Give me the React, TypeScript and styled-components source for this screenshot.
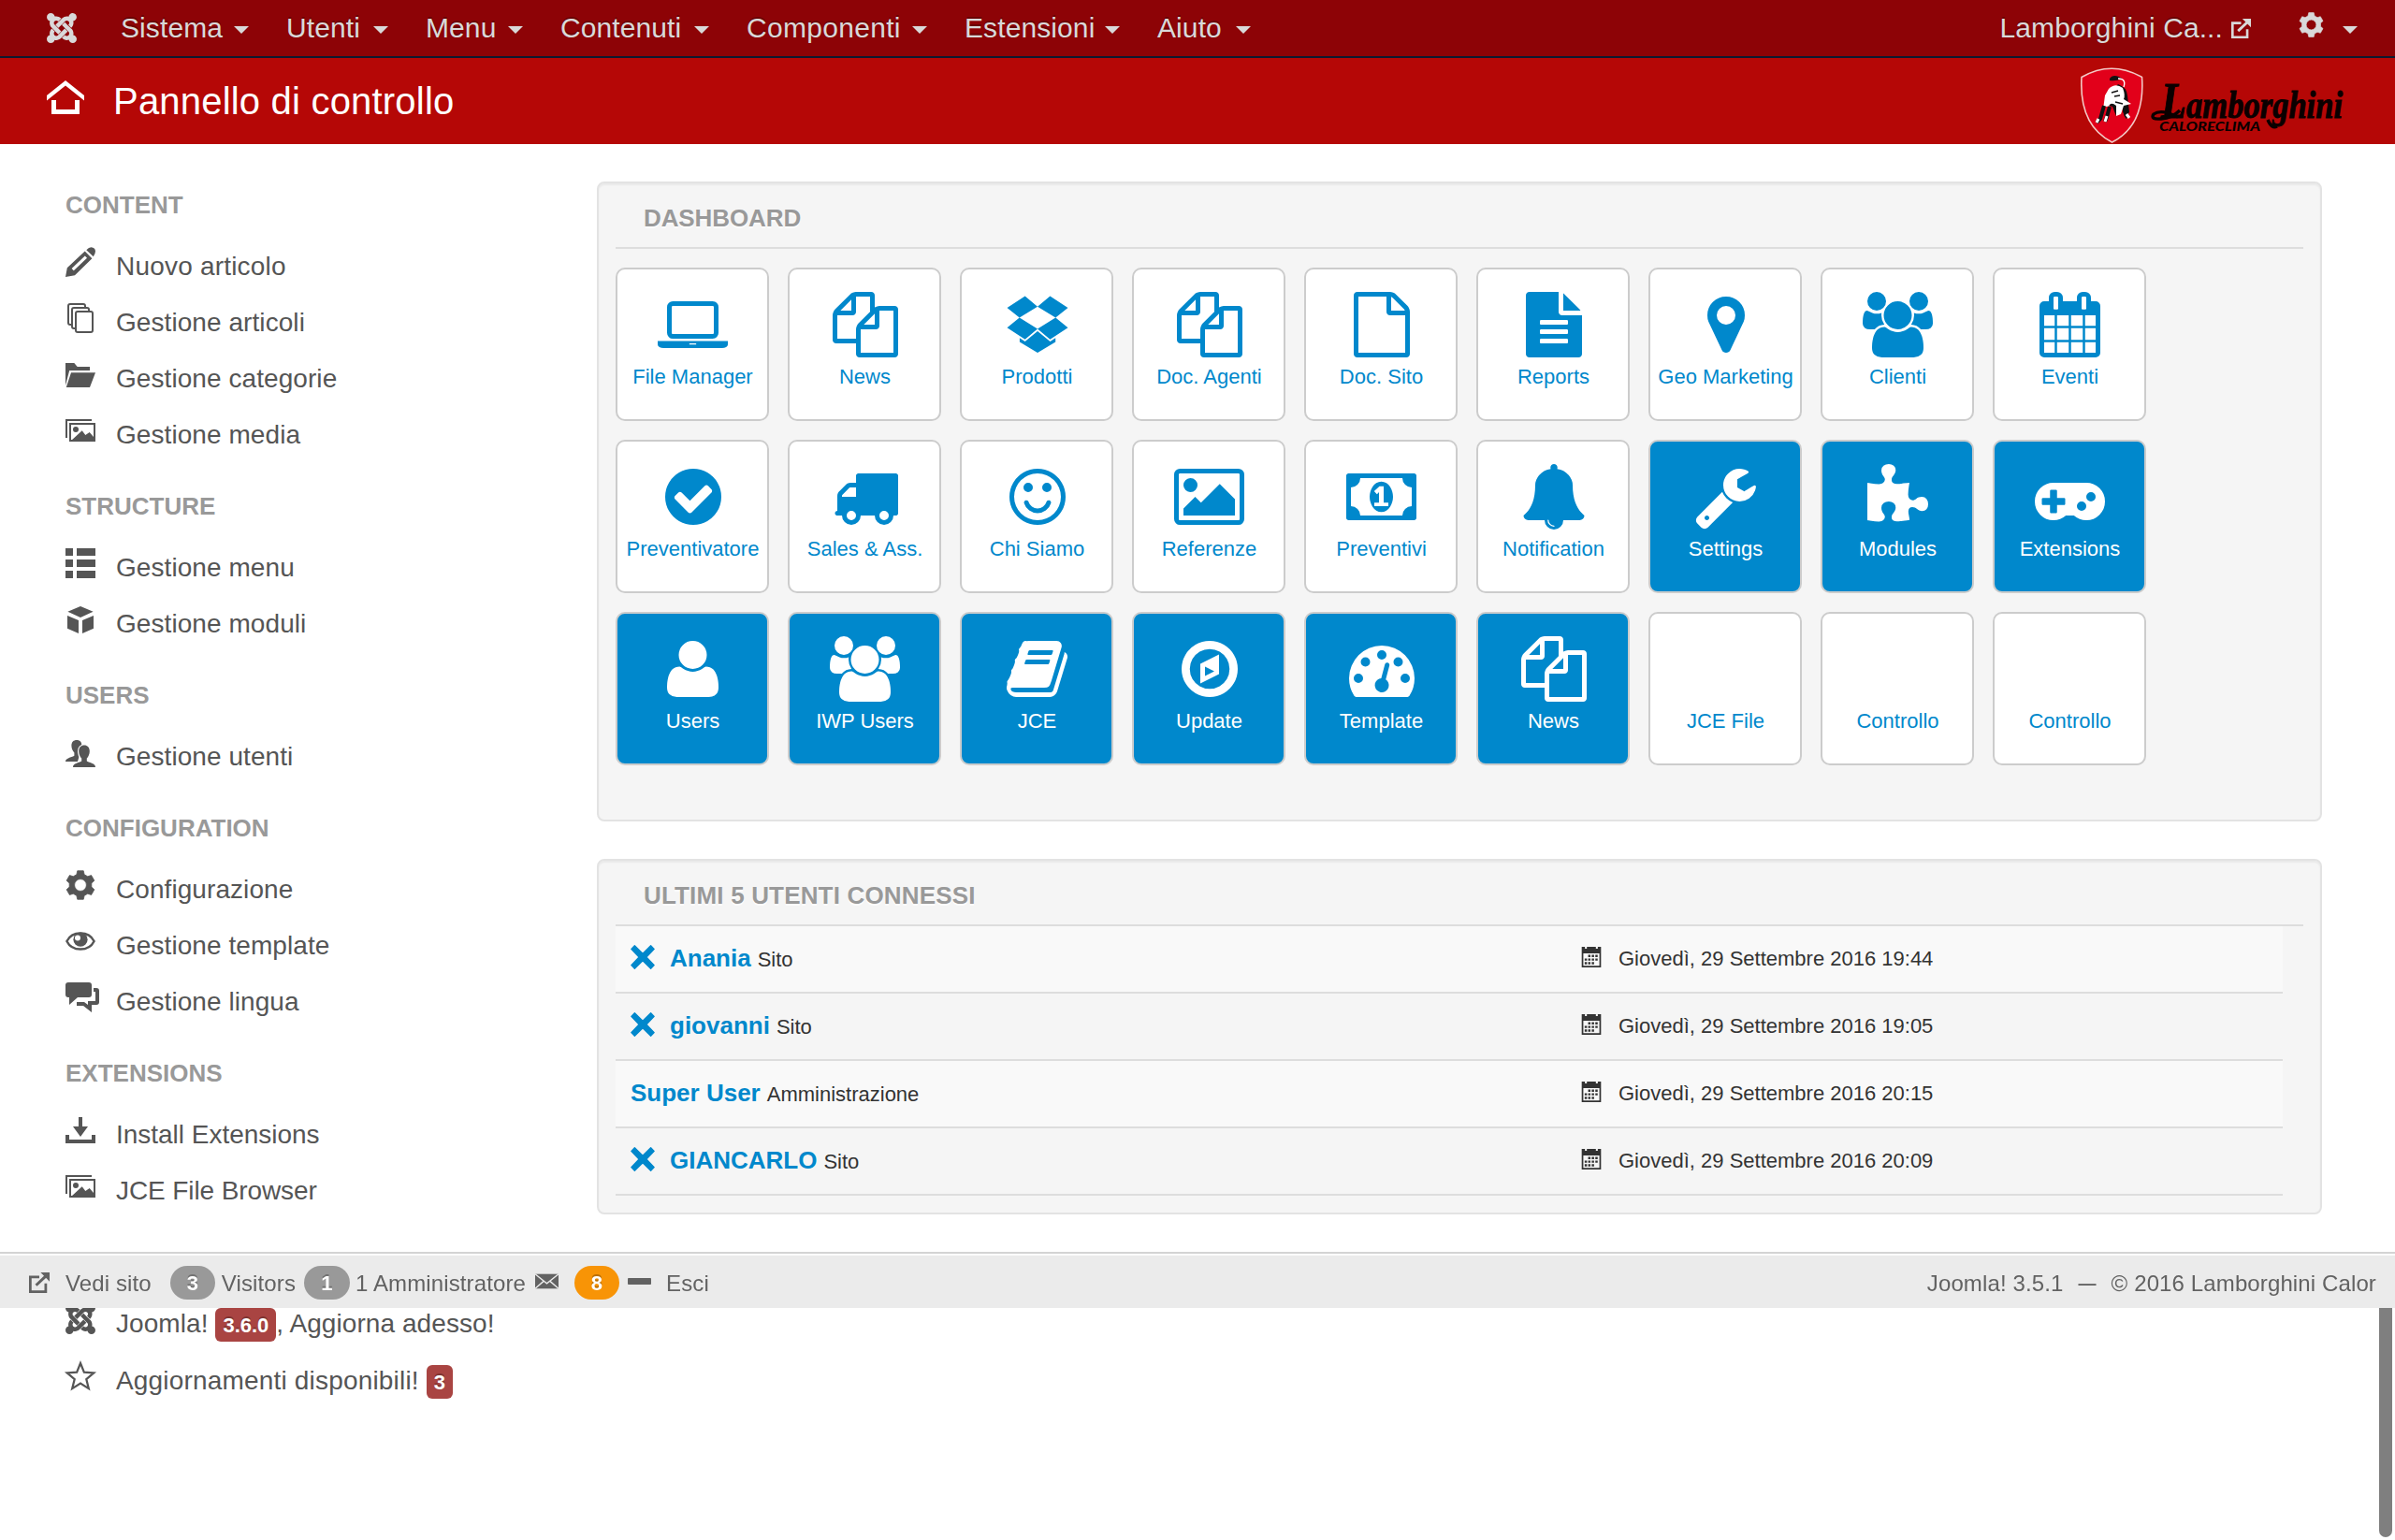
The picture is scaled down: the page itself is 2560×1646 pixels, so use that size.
import React from "react";
import styled, { createGlobalStyle, css } from "styled-components";
import { FaJoomla } from "react-icons/fa";

const GlobalStyle = createGlobalStyle`
  html, body { margin: 0; padding: 0; }
  body {
    background: #fff;
    color: #555;
    font-family: "Liberation Sans", Arial, Helvetica, sans-serif;
    font-size: 26px;
    overflow: hidden;
  }
  svg { display: block; flex: none; }
`;

/* ---------- tile glyphs, drawn on a 1792 unit em with the y axis up ---------- */

const ring =
  "M1536 640q0 -209 -103 -385.5t-279.5 -279.5t-385.5 -103t-385.5 103t-279.5 279.5t-103 385.5t103 385.5t279.5 279.5t385.5 103t385.5 -103t279.5 -279.5t103 -385.5z";
const dot = (x: number, y: number) =>
  `M${x} ${y}q0 53 -37.5 90.5t-90.5 37.5t-90.5 -37.5t-37.5 -90.5t37.5 -90.5t90.5 -37.5t90.5 37.5t37.5 90.5z`;
const bar = (y: number) =>
  `M1152 ${y}v64q0 14 -9 23t-23 9h-704q-14 0 -23 -9t-9 -23v-64q0 -14 9 -23t23 -9h704q14 0 23 9t9 23z`;

const glyphs: Record<string, [number, string]> = {
  laptop: [1920, "M416 256q-66 0 -113 47t-47 113v704q0 66 47 113t113 47h1088q66 0 113 -47t47 -113v-704q0 -66 -47 -113t-113 -47h-1088zM384 1120v-704q0 -13 9.5 -22.5t22.5 -9.5h1088q13 0 22.5 9.5t9.5 22.5v704q0 13 -9.5 22.5t-22.5 9.5h-1088q-13 0 -22.5 -9.5t-9.5 -22.5zM1760 192h160v-96q0 -40 -47 -68t-113 -28h-1600q-66 0 -113 28t-47 68v96h160h1600zM1040 96q16 0 16 16t-16 16h-160q-16 0 -16 -16t16 -16h160z"],
  files: [1792, "M1696 1152q40 0 68 -28t28 -68v-1216q0 -40 -28 -68t-68 -28h-960q-40 0 -68 28t-28 68v288h-544q-40 0 -68 28t-28 68v672q0 40 20 88t48 76l408 408q28 28 76 48t88 20h416q40 0 68 -28t28 -68v-328q68 40 128 40h416zM1152 939l-299 -299h299v299zM512 1323l-299 -299h299v299zM708 676l316 316v416h-384v-416q0 -40 -28 -68t-68 -28h-416v-640h512v256q0 40 20 88t48 76zM1664 -128v1152h-384v-416q0 -40 -28 -68t-68 -28h-416v-640h896z"],
  dropbox: [1792, "M402 829l494 -305l-342 -285l-490 319zM1388 274v-108l-490 -293v-1l-1 1l-1 -1v1l-489 293v108l147 -96l342 284v2l1 -1l1 1v-2l343 -284zM554 1418l342 -285l-494 -304l-338 270zM1390 829l338 -271l-489 -319l-343 285zM1239 1418l489 -319l-338 -270l-494 304z"],
  file: [1536, "M1468 1156q28 -28 48 -76t20 -88v-1152q0 -40 -28 -68t-68 -28h-1344q-40 0 -68 28t-28 68v1600q0 40 28 68t68 28h896q40 0 88 -20t76 -48zM1024 1400v-376h376q-10 29 -22 41l-313 313q-12 12 -41 22zM1408 -128v1024h-416q-40 0 -68 28t-28 68v416h-768v-1536h1280z"],
  report: [1536, "M1468 1060q14 -14 28 -36h-472v472q22 -14 36 -28zM992 896h544v-1056q0 -40 -28 -68t-68 -28h-1344q-40 0 -68 28t-28 68v1600q0 40 28 68t68 28h800v-544q0 -40 28 -68t68 -28z" + bar(160) + bar(416) + bar(672)],
  marker: [1024, "M768 896q0 106 -75 181t-181 75t-181 -75t-75 -181t75 -181t181 -75t181 75t75 181zM1024 896q0 -109 -33 -179l-364 -774q-16 -33 -47.5 -52t-67.5 -19t-67.5 19t-46.5 52l-365 774q-33 70 -33 179q0 212 150 362t362 150t362 -150t150 -362z"],
  users: [1920, "M593 640q-162 -5 -265 -128h-134q-82 0 -138 40.5t-56 118.5q0 353 124 353q6 0 43.5 -21t97.5 -42.5t119 -21.5q67 0 133 23q-5 -37 -5 -66q0 -139 81 -256zM1664 3q0 -120 -73 -189.5t-194 -69.5h-874q-121 0 -194 69.5t-73 189.5q0 53 3.5 103.5t14 109t26.5 108.5t43 97.5t62 81t85.5 53.5t111.5 20q10 0 43 -21.5t73 -48t107 -48t135 -21.5t135 21.5t107 48t73 48t43 21.5q61 0 111.5 -20t85.5 -53.5t62 -81t43 -97.5t26.5 -108.5t14 -109t3.5 -103.5zM640 1280q0 -106 -75 -181t-181 -75t-181 75t-75 181t75 181t181 75t181 -75t75 -181zM1344 896q0 -159 -112.5 -271.5t-271.5 -112.5t-271.5 112.5t-112.5 271.5t112.5 271.5t271.5 112.5t271.5 -112.5t112.5 -271.5zM1920 671q0 -78 -56 -118.5t-138 -40.5h-134q-103 123 -265 128q81 117 81 256q0 29 -5 66q66 -23 133 -23q59 0 119 21.5t97.5 42.5t43.5 21q124 0 124 -353zM1792 1280q0 -106 -75 -181t-181 -75t-181 75t-75 181t75 181t181 75t181 -75t75 -181z"],
  calendar: [1664, "M128 -128h288v288h-288v-288zM480 -128h320v288h-320v-288zM128 224h288v320h-288v-320zM480 224h320v320h-320v-320zM128 608h288v288h-288v-288zM864 -128h320v288h-320v-288zM480 608h320v288h-320v-288zM1248 -128h288v288h-288v-288zM864 224h320v320h-320v-320zM512 1088v288q0 13 -9.5 22.5t-22.5 9.5h-64q-13 0 -22.5 -9.5t-9.5 -22.5v-288q0 -13 9.5 -22.5t22.5 -9.5h64q13 0 22.5 9.5t9.5 22.5zM1248 224h288v320h-288v-320zM864 608h320v288h-320v-288zM1248 608h288v288h-288v-288zM1280 1088v288q0 13 -9.5 22.5t-22.5 9.5h-64q-13 0 -22.5 -9.5t-9.5 -22.5v-288q0 -13 9.5 -22.5t22.5 -9.5h64q13 0 22.5 9.5t9.5 22.5zM1664 1152v-1280q0 -52 -38 -90t-90 -38h-1408q-52 0 -90 38t-38 90v1280q0 52 38 90t90 38h128v96q0 66 47 113t113 47h64q66 0 113 -47t47 -113v-96h384v96q0 66 47 113t113 47h64q66 0 113 -47t47 -113v-96h128q52 0 90 -38t38 -90z"],
  check: [1536, "M1284 802q0 28 -18 46l-91 90q-19 19 -45 19t-45 -19l-408 -407l-226 226q-19 19 -45 19t-45 -19l-91 -90q-18 -18 -18 -46q0 -27 18 -45l362 -362q19 -19 45 -19q27 0 46 19l543 543q18 18 18 45z" + ring],
  truck: [1792, "M640 128q0 52 -38 90t-90 38t-90 -38t-38 -90t38 -90t90 -38t90 38t38 90zM256 640h384v256h-158q-13 0 -22 -9l-195 -195q-9 -9 -9 -22v-30zM1536 128q0 52 -38 90t-90 38t-90 -38t-38 -90t38 -90t90 -38t90 38t38 90zM1792 1216v-1024q0 -15 -4 -26.5t-13.5 -18.5t-16.5 -11.5t-23.5 -6t-22.5 -2t-25.5 0t-22.5 0.5q0 -106 -75 -181t-181 -75t-181 75t-75 181h-384q0 -106 -75 -181t-181 -75t-181 75t-75 181h-64q-3 0 -22.5 -0.5t-25.5 0t-22.5 2t-23.5 6t-16.5 11.5t-13.5 18.5t-4 26.5q0 26 19 45t45 19v320q0 8 -0.5 35t0 38t2.5 34.5t6.5 37t14 30.5t22.5 30l198 198q19 19 50.5 32t58.5 13h160v192q0 26 19 45t45 19h1024q26 0 45 -19t19 -45z"],
  smile: [1536, "M1134 461q-37 -121 -138 -195t-228 -74t-228 74t-138 195q-8 25 4 48.5t38 31.5q25 8 48.5 -4t31.5 -38q25 -80 92.5 -129.5t151.5 -49.5t151.5 49.5t92.5 129.5q8 26 32 38t49 4t37 -31.5t4 -48.5z" + dot(640, 896) + dot(1152, 896) + "M1408 640q0 130 -51 248.5t-136.5 204t-204 136.5t-248.5 51t-248.5 -51t-204 -136.5t-136.5 -204t-51 -248.5t51 -248.5t136.5 -204t204 -136.5t248.5 -51t248.5 51t204 136.5t136.5 204t51 248.5z" + ring],
  picture: [1920, "M640 960q0 -80 -56 -136t-136 -56t-136 56t-56 136t56 136t136 56t136 -56t56 -136zM1664 576v-448h-1408v192l320 320l160 -160l512 512zM1760 1280h-1600q-13 0 -22.5 -9.5t-9.5 -22.5v-1216q0 -13 9.5 -22.5t22.5 -9.5h1600q13 0 22.5 9.5t9.5 22.5v1216q0 13 -9.5 22.5t-22.5 9.5zM1920 1248v-1216q0 -66 -47 -113t-113 -47h-1600q-66 0 -113 47t-47 113v1216q0 66 47 113t113 47h1600q66 0 113 -47t47 -113z"],
  money: [1920, "M768 384h384v96h-128v448h-114l-148 -137l77 -80q42 37 55 57h2v-288h-128v-96zM1280 640q0 -70 -21 -142t-59.5 -134t-101.5 -101t-138 -39t-138 39t-101.5 101t-59.5 134t-21 142t21 142t59.5 134t101.5 101t138 39t138 -39t101.5 -101t59.5 -134t21 -142zM1792 384v512q-106 0 -181 75t-75 181h-1152q0 -106 -75 -181t-181 -75v-512q106 0 181 -75t75 -181h1152q0 106 75 181t181 75zM1920 1216v-1152q0 -26 -19 -45t-45 -19h-1792q-26 0 -45 19t-19 45v1152q0 26 19 45t45 19h1792q26 0 45 -19t19 -45z"],
  bell: [1792, "M912 -160q0 16 -16 16q-59 0 -101.5 42.5t-42.5 101.5q0 16 -16 16t-16 -16q0 -73 51.5 -124.5t124.5 -51.5q16 0 16 16zM1728 128q0 -52 -38 -90t-90 -38h-448q0 -106 -75 -181t-181 -75t-181 75t-75 181h-448q-52 0 -90 38t-38 90q50 42 91 88t85 119.5t74.5 158.5t50 206t19.5 260q0 152 117 282.5t307 158.5q-8 19 -8 39q0 40 28 68t68 28t68 -28t28 -68q0 -20 -8 -39q190 -28 307 -158.5t117 -282.5q0 -139 19.5 -260t50 -206t74.5 -158.5t85 -119.5t91 -88z"],
  wrench: [1664, "M384 64q0 26 -19 45t-45 19t-45 -19t-19 -45t19 -45t45 -19t45 19t19 45zM1028 484l-682 -682q-37 -37 -90 -37q-52 0 -91 37l-106 108q-38 36 -38 90q0 53 38 91l681 681q39 -98 114.5 -173.5t173.5 -114.5zM1662 919q0 -39 -23 -106q-47 -134 -164.5 -217.5t-258.5 -83.5q-185 0 -316.5 131.5t-131.5 316.5t131.5 316.5t316.5 131.5q58 0 121.5 -16.5t107.5 -46.5q16 -11 16 -28t-16 -28l-293 -169v-224l193 -107q5 3 79 48.5t135.5 81t70.5 35.5q15 0 23.5 -10t8.5 -25z"],
  puzzle: [1664, "M1664 438q0 -81 -44.5 -135t-123.5 -54q-41 0 -77.5 17.5t-59 38t-56.5 38t-71 17.5q-110 0 -110 -124q0 -39 16 -115t15 -115v-5q-22 0 -33 -1q-34 -3 -97.5 -11.5t-115.5 -13.5t-98 -5q-61 0 -103 26.5t-42 83.5q0 37 17.5 71t38 56.5t38 59t17.5 77.5q0 79 -54 123.5t-135 44.5q-84 0 -143 -45.5t-59 -127.5q0 -43 15 -83t33.5 -64.5t33.5 -53t15 -50.5q0 -45 -46 -89q-37 -35 -117 -35q-95 0 -245 24q-9 2 -27.5 4t-27.5 4l-13 2q-1 0 -3 1q-2 0 -2 1v1024q2 -1 17.5 -3.5t34 -5t21.5 -3.5q150 -24 245 -24q80 0 117 35q46 44 46 89q0 22 -15 50.5t-33.5 53t-33.5 64.5t-15 83q0 82 59 127.5t144 45.5q80 0 134 -44.5t54 -123.5q0 -41 -17.5 -77.5t-38 -59t-38 -56.5t-17.5 -71q0 -57 42 -83.5t103 -26.5q64 0 180 15t163 17v-2q-1 -2 -3.5 -17.5t-5 -34t-3.5 -21.5q-24 -150 -24 -245q0 -80 35 -117q44 -46 89 -46q22 0 50.5 15t53 33.5t64.5 33.5t83 15q82 0 127.5 -59t45.5 -143z"],
  gamepad: [1920, "M832 448v128q0 14 -9 23t-23 9h-192v192q0 14 -9 23t-23 9h-128q-14 0 -23 -9t-9 -23v-192h-192q-14 0 -23 -9t-9 -23v-128q0 -14 9 -23t23 -9h192v-192q0 -14 9 -23t23 -9h128q14 0 23 9t9 23v192h192q14 0 23 9t9 23z" + dot(1408, 384) + dot(1664, 640) + "M1920 512q0 -212 -150 -362t-362 -150q-192 0 -338 128h-220q-146 -128 -338 -128q-212 0 -362 150t-150 362t150 362t362 150h896q212 0 362 -150t150 -362z"],
  user: [1408, "M1408 131q0 -120 -73 -189.5t-194 -69.5h-874q-121 0 -194 69.5t-73 189.5q0 53 3.5 103.5t14 109t26.5 108.5t43 97.5t62 81t85.5 53.5t111.5 20q9 0 42 -21.5t74.5 -48t108 -48t133.5 -21.5t133.5 21.5t108 48t74.5 48t42 21.5q61 0 111.5 -20t85.5 -53.5t62 -81t43 -97.5t26.5 -108.5t14 -109t3.5 -103.5zM1088 1024q0 -159 -112.5 -271.5t-271.5 -112.5t-271.5 112.5t-112.5 271.5t112.5 271.5t271.5 112.5t271.5 -112.5t112.5 -271.5z"],
  book: [1664, "M1639 1058q40 -57 18 -129l-275 -906q-19 -64 -76.5 -107.5t-122.5 -43.5h-923q-77 0 -148.5 53.5t-99.5 131.5q-24 67 -2 127q0 4 3 27t4 37q1 8 -3 21.5t-3 19.5q2 11 8 21t16.5 23.5t16.5 23.5q23 38 45 91.5t30 91.5q3 10 0.5 30t-0.5 28q3 11 17 28t17 23q21 36 42 92t25 90q1 9 -2.5 32t0.5 28q4 13 22 30.5t22 22.5q19 26 42.5 84.5t27.5 96.5q1 8 -3 25.5t-2 26.5q2 8 9 18t18 23t17 21q8 12 16.5 30.5t15 35t16 36t19.5 32t26.5 23.5t36 11.5t47.5 -5.5l-1 -3q38 9 51 9h761q74 0 114 -56t18 -130l-274 -906q-36 -119 -71.5 -153.5t-128.5 -34.5h-869q-27 0 -38 -15q-11 -16 -1 -43q24 -70 144 -70h923q29 0 56 15.5t35 41.5l300 987q7 22 5 57q38 -15 59 -43zM575 1056q-4 -13 2 -22.5t20 -9.5h608q13 0 25.5 9.5t16.5 22.5l21 64q4 13 -2 22.5t-20 9.5h-608q-13 0 -25.5 -9.5t-16.5 -22.5zM492 800q-4 -13 2 -22.5t20 -9.5h608q13 0 25.5 9.5t16.5 22.5l21 64q4 13 -2 22.5t-20 9.5h-608q-13 0 -25.5 -9.5t-16.5 -22.5z"],
  compass: [1536, "M640 448l256 128l-256 128v-256zM1024 1039v-542l-512 -256v542zM1312 640q0 148 -73 273t-198 198t-273 73t-273 -73t-198 -198t-73 -273t73 -273t198 -198t273 -73t273 73t198 198t73 273z" + ring],
  gauge: [1792, dot(384, 384) + dot(576, 832) + dot(1664, 384) + dot(1024, 1024) + dot(1472, 832) + "M1004 351l101 382q6 26 -7.5 48.5t-38.5 29.5t-48 -6.5t-30 -39.5l-101 -382q-60 -5 -107 -43.5t-63 -98.5q-20 -77 20 -146t117 -89t146 20t89 117q16 60 -6 117t-72 91zM1792 384q0 -261 -141 -483q-19 -29 -54 -29h-1402q-35 0 -54 29q-141 221 -141 483q0 182 71 348t191 286t286 191t348 71t348 -71t286 -191t191 -286t71 -348z"],
};

const Glyph = ({ name }: { name: string }) => {
  const [w, d] = glyphs[name];
  return (
    <svg width={(w * 70) / 1792} height={70} viewBox={`0 0 ${w} 1792`} fill="currentColor">
      <path fillRule="evenodd" transform="translate(0 1536) scale(1 -1)" d={d} />
    </svg>
  );
};

/* ---------- small 32 unit icons ---------- */

const gearPath = (() => {
  const pts: string[] = [];
  for (let i = 0; i < 6; i++) {
    const base = -90 + i * 60;
    [[-20, 12], [-12, 15.6], [12, 15.6], [20, 12]].forEach(([a, r]) => {
      const t = ((base + a) * Math.PI) / 180;
      pts.push(`${(16 + r * Math.cos(t)).toFixed(2)} ${(16 + r * Math.sin(t)).toFixed(2)}`);
    });
  }
  return `M${pts.join("L")}ZM16 9.6a6.4 6.4 0 1 0 0 12.8a6.4 6.4 0 1 0 0-12.8Z`;
})();

const starPath = (() => {
  const pts: string[] = [];
  for (let i = 0; i < 10; i++) {
    const r = i % 2 ? 6.6 : 15;
    const t = ((-90 + i * 36) * Math.PI) / 180;
    pts.push(`${(16 + r * Math.cos(t)).toFixed(2)} ${(17 + r * Math.sin(t)).toFixed(2)}`);
  }
  return `M${pts.join("L")}Z`;
})();

const picture = (
  <>
    <path d="M1 24V5H28" fill="none" stroke="currentColor" strokeWidth="2" />
    <rect x="5" y="9" width="26" height="18" fill="none" stroke="currentColor" strokeWidth="2" />
    <circle cx="11" cy="15" r="3" />
    <path d="M6 27L17.7 16.2L21.3 21L25.7 18L30 23V27Z" />
  </>
);

const shapes: Record<string, React.ReactNode> = {
  pencil: (
    <>
      <path fillRule="evenodd" d="M20.7 4.6L28.4 12.3L10 30.2L0 32L1.8 22.2ZM20.8 9.5L6.6 23L8.8 25.2L23 11.7Z" />
      <path d="M22.3 3.2Q25 .3 27.5 .3Q31.7 .6 32 4.6Q32 7.2 29.8 10.2Z" />
    </>
  ),
  copy: (
    <g fill="#fff" stroke="currentColor" strokeWidth="2">
      <rect x="3" y="1" width="18" height="22" rx="2" />
      <rect x="7" y="5" width="18" height="22" rx="2" />
      <rect x="11" y="9" width="18" height="22" rx="2" />
    </g>
  ),
  folder: <path d="M0 4H9.3L12.7 8H26V12H4.2L0 28ZM6 14.2H32L26 30H.8Z" />,
  picture,
  list: <path d="M0 0H8V8H0ZM12 0H32V8H12ZM0 12H8V20H0ZM12 12H32V20H12ZM0 24H8V32H0ZM12 24H32V32H12Z" />,
  cube: <path d="M16 2L29.6 7.7L16 14L2.4 7.7ZM2 12L14 17V31L2 25.8ZM30 12L18 17V31L30 25.8Z" />,
  people: (
    <>
      <path d="M6.4 9C6.4 5 8.6 3 12 3S17.4 5 17.4 9C17.4 12 16 14.6 15 16V19L13 26H0C0 22.6 6 21.6 9.4 19.8V16.4C7.8 15 6.4 12 6.4 9Z" />
      <path
        d="M14.2 15C14.2 10.8 16.6 8.6 20 8.6S25.8 10.8 25.8 15C25.8 18 24.4 21 22.8 22.6V25.6C26 27.4 32 28 32 32H8C8 28 14 27.4 17.2 25.6V22.6C15.6 21 14.2 18 14.2 15Z"
        stroke="#fff"
        strokeWidth="2.4"
        paintOrder="stroke"
      />
    </>
  ),
  gear: <path fillRule="evenodd" stroke="currentColor" strokeWidth=".8" strokeLinejoin="round" d={gearPath} />,
  eye: (
    <>
      <path d="M1.4 16C7 4.6 25 4.6 30.6 16C25 27.4 7 27.4 1.4 16Z" fill="none" stroke="currentColor" strokeWidth="2.4" />
      <circle cx="16" cy="14.2" r="7.6" />
      <circle cx="13" cy="12.6" r="3" fill="#fff" />
    </>
  ),
  chat: (
    <path d="M3 0H25Q28 0 28 3V13Q28 16 25 16H13L4 24V16H3Q0 16 0 13V3Q0 0 3 0ZM30 6H33Q36 6 36 9V21Q36 24 33 24H28V32L19 25H12V21H20L24 24V20H32V10H30Z" />
  ),
  download: <path d="M14 2H18V12H24L16 23L8 12H14ZM0 21H4V26H28V21H32V30H0Z" />,
  star: <path d={starPath} fill="none" stroke="currentColor" strokeWidth="2.2" />,
  external: (
    <>
      <path d="M16 7H2V30H26V17" fill="none" stroke="currentColor" strokeWidth="4" />
      <path d="M11 20L27 5" fill="none" stroke="currentColor" strokeWidth="4.4" />
      <path d="M18 0H32V14Z" />
    </>
  ),
  cross: (
    <path d="M5.4 1L16 11.4L26.6 1L31 5.4L20.8 16L31 26.6L26.6 31L16 20.6L5.4 31L1 26.6L11.2 16L1 5.4Z" stroke="currentColor" strokeWidth="1.6" strokeLinejoin="round" />
  ),
  calendar: (
    <>
      <path fillRule="evenodd" d="M1 0H6V3H9V0H23V3H26V0H31V32H1ZM3.5 10V29.5H28.5V10Z" />
      <path d="M11 12.500h3.6v3.6H11zM16.600 12.500h3.6v3.6h-3.6zM22.200 12.500h3.6v3.6h-3.6zM5.600 18h3.6v3.6H5.600zM11 18h3.6v3.6H11zM16.600 18h3.6v3.6h-3.6zM22.200 18h3.6v3.6h-3.6zM5.600 23.500h3.6v3.6H5.600zM11 23.500h3.6v3.6H11zM16.600 23.500h3.6v3.6h-3.6z" />
    </>
  ),
  mail: (
    <>
      <path d="M0 6H32V26H0Z" />
      <path d="M0 6L16 19L32 6M0 26L12 15.5M32 26L20 15.5" fill="none" stroke="#ebebeb" strokeWidth="1.8" />
    </>
  ),
  minus: <path d="M1 11.500H31Q32 11.500 32 13V19Q32 20.500 31 20.500H1Q0 20.500 0 19V13Q0 11.500 1 11.500Z" />,
};

const JoomlaMark = styled(FaJoomla)`
  width: 32px;
  height: 32px;
`;

const Icon = ({ name, size = 32 }: { name: string; size?: number }) =>
  name === "joomla" ? (
    <JoomlaMark viewBox="0 32 448 448" />
  ) : (
    <svg width={size} height={size} viewBox="0 0 32 32" fill="currentColor" overflow="visible">
      {shapes[name]}
    </svg>
  );

/* ---------- layout ---------- */

const Page = styled.div`
  width: 2560px;
  height: 1646px;
  overflow: hidden;
`;

const NavBar = styled.nav`
  box-sizing: border-box;
  height: 62px;
  padding: 0 40px 0 50px;
  display: flex;
  align-items: center;
  background: #8d0306;
  border-bottom: 2px solid #0d1a30;
  color: #d9d9d9;
  font-size: 30px;
  line-height: 60px;
  letter-spacing: 0.1px;
  text-shadow: 0 -2px 0 rgba(0, 0, 0, 0.25);
`;

const Menu = styled.ul`
  display: flex;
  flex: 1;
  margin: 0 0 0 47px;
  padding: 0;
  gap: 40px;
  list-style: none;
`;

const MenuItem = styled.li<{ $w: number; $track?: number }>`
  display: flex;
  align-items: center;
  width: ${(p) => p.$w}px;
  justify-content: space-between;
  letter-spacing: ${(p) => p.$track ?? 0.1}px;
  white-space: nowrap;
`;

const Caret = styled.span`
  margin-top: 4px;
  border: 8px solid transparent;
  border-top-color: currentColor;
  border-bottom-width: 0;
`;

const SiteLink = styled.a`
  display: flex;
  align-items: center;
  gap: 9px;
  margin-right: 51px;
`;

const Settings = styled.div`
  display: flex;
  align-items: center;
  gap: 20px;
  & > svg { margin-top: -7px; }
`;

const Header = styled.header`
  box-sizing: border-box;
  height: 92px;
  padding: 0 48px 0 50px;
  display: flex;
  align-items: center;
  background: #b50706;
  color: #fff;
`;

const HomeIcon = styled.svg`
  margin-top: -8px;
`;

const Title = styled.h1`
  flex: 1;
  margin: 0 0 0 31px;
  font-size: 40px;
  font-weight: 400;
  line-height: 92px;
  letter-spacing: 0.2px;
`;

const Columns = styled.div`
  display: flex;
  padding-left: 70px;
`;

const Sidebar = styled.aside`
  width: 568px;
  padding-top: 18px;
`;

const GroupTitle = styled.h2`
  box-sizing: border-box;
  height: 82px;
  margin: 0;
  padding-top: 28px;
  color: #999;
  font-size: 26px;
  line-height: 38px;
  text-transform: uppercase;
`;

const SideItem = styled.a<{ $tall?: boolean; $track?: number }>`
  box-sizing: border-box;
  display: flex;
  align-items: center;
  height: ${(p) => (p.$tall ? 62 : 60)}px;
  padding-top: 2px;
  font-size: 28px;
  letter-spacing: ${(p) => p.$track ?? 0.07}px;
  color: #555;
  white-space: pre;
  & > svg { margin: -10px 22px 0 0; }
`;

const Label = styled.span`
  box-sizing: border-box;
  height: 36px;
  padding: 0 8px;
  margin-top: 2px;
  border-radius: 6px;
  background: #a94442;
  color: #fff;
  font-size: 22px;
  font-weight: 700;
  line-height: 37px;
  letter-spacing: 0;
  text-shadow: 0 -2px 0 rgba(0, 0, 0, 0.25);
`;

const Main = styled.main`
  display: flex;
  flex-direction: column;
  gap: 40px;
  padding-top: 40px;
`;

const Panel = styled.section<{ $h: number }>`
  box-sizing: border-box;
  width: 1844px;
  height: ${(p) => p.$h}px;
  padding: 0 18px;
  border: 2px solid #e3e3e3;
  border-radius: 8px;
  background: #f5f5f5;
  box-shadow: inset 0 2px 2px rgba(0, 0, 0, 0.05);
`;

const PanelTitle = styled.h2<{ $track: number }>`
  margin: 0;
  padding: 6px 30px 0;
  border-bottom: 2px solid #ddd;
  color: #999;
  font-size: 26px;
  line-height: 62px;
  text-transform: uppercase;
  text-shadow: 0 2px 0 rgba(255, 255, 255, 0.8);
  letter-spacing: ${(p) => p.$track}px;
`;

const Tiles = styled.div`
  display: flex;
  flex-wrap: wrap;
  gap: 20px;
  padding-top: 20px;
`;

const Tile = styled.a<{ $blue?: boolean }>`
  box-sizing: border-box;
  width: 164px;
  height: 164px;
  padding: 24px 0 0 1px;
  display: flex;
  flex-direction: column;
  align-items: center;
  border: 2px solid #ccc;
  border-radius: 10px;
  ${(p) =>
    p.$blue
      ? css`background: #0088cc; color: #fff;`
      : css`background: #fff; color: #0088cc;`}
`;

const TileIcon = styled.span`
  height: 70px;
`;

const TileText = styled.span`
  font-size: 22px;
  line-height: 42px;
  white-space: nowrap;
`;

const Row = styled.div<{ $odd: boolean }>`
  box-sizing: border-box;
  width: 1782px;
  height: 72px;
  padding-left: 16px;
  display: grid;
  grid-template-columns: 1016px 1fr;
  align-items: center;
  border-bottom: 2px solid #ddd;
  background: ${(p) => (p.$odd ? "#f9f9f9" : "transparent")};
`;

const UserCell = styled.div`
  display: flex;
  align-items: center;
  & > svg { margin: -5px 16px 0 0; color: #0088cc; }
`;

const UserName = styled.div`
  color: #0088cc;
  font-weight: 700;
  font-size: 26px;
  line-height: 40px;
`;

const Place = styled.small`
  margin-left: 7px;
  color: #333;
  font-size: 22px;
  font-weight: 400;
`;

const DateCell = styled.div`
  display: flex;
  align-items: center;
  gap: 18px;
  color: #333;
  font-size: 22px;
  & > svg { margin-top: -5px; }
`;

const StatusBar = styled.footer`
  position: fixed;
  z-index: 2;
  left: 0;
  top: 1338px;
  box-sizing: border-box;
  width: 2560px;
  height: 60px;
  padding: 4px 20px 0 31px;
  display: flex;
  align-items: center;
  background: #ebebeb;
  border-top: 2px solid #d4d4d4;
  box-shadow: inset 0 2px 0 #fcfcfc;
  color: #626262;
  font-size: 24px;
  line-height: 56px;
  letter-spacing: 0.12px;
  white-space: nowrap;
`;

const Slot = styled.span<{ $l?: number; $up?: number }>`
  display: flex;
  margin-left: ${(p) => p.$l ?? 0}px;
  margin-top: ${(p) => (p.$up ? -p.$up : 2)}px;
`;

const Pill = styled.span<{ $l: number; $w: number; $color: string }>`
  margin-left: ${(p) => p.$l}px;
  width: ${(p) => p.$w}px;
  height: 36px;
  border-radius: 18px;
  background: ${(p) => p.$color};
  color: #fff;
  font-size: 22px;
  font-weight: 700;
  line-height: 38px;
  text-align: center;
  text-shadow: 0 -2px 0 rgba(0, 0, 0, 0.25);
`;

const Legal = styled.span`
  display: flex;
  gap: 16px;
  margin-left: auto;
  margin-top: 2px;
`;

const Dash = styled.span`
  font-size: 19px;
  font-weight: 700;
`;

const ScrollThumb = styled.div`
  position: fixed;
  right: 3px;
  top: 1390px;
  width: 14px;
  height: 253px;
  border-radius: 7px;
  background: #7f7f7f;
`;

/* ---------- brand ---------- */

const Brand = () => (
  <svg width="288" height="92" viewBox="0 0 288 92" overflow="visible">
    <path d="M1 20.5Q33 2 65.500 20.500Q69 72 33.500 90Q-2 72 1 20.500Z" fill="#e2001a" stroke="#f3c9c6" strokeWidth="1.6" />
    <path d="M31 22Q34 17 41 20L44 22Q38 25 31 24Z" fill="#111" />
    <path d="M40 22Q49 22 46 31" fill="none" stroke="#fff" strokeWidth="1.4" />
    <path d="M40 28Q49 31 50 40L52 58L47 63L43 50L38 62L34 52L27 50Q29 42 33 36Z" fill="#111" />
    <path d="M30 33Q37 26 45 32Q48 40 46 44L54 49L46 51L43 60L38 62L38 51Q32 46 30 52Q25 51 24 55L26 40Z" fill="#fff" />
    <path d="M33 37l7-2M36 41l6-1M37 47l8 2" stroke="#111" strokeWidth="1.4" />
    <path d="M25 51L21 65L17 69M31 52L28 63L26 68M47 56L50 64" fill="none" stroke="#111" strokeWidth="4" />
    <path d="M19 65l-2 4M28 62l-2 6M49 60l3 4" fill="none" stroke="#fff" strokeWidth="3" />
    <text x="86" y="64" fill="#0a0000" fontFamily="'Liberation Serif', serif" fontStyle="italic" fontWeight="700" fontSize="42" textLength="194" lengthAdjust="spacingAndGlyphs" stroke="#0a0000" strokeWidth="1">
      <tspan fontSize="54">L</tspan>amborghini
    </text>
    <path d="M104 63Q86 54 78 60Q74 66 86 65Q98 64 106 56M200 66Q204 76 210 73" fill="none" stroke="#0a0000" strokeWidth="3.4" />
    <text x="84" y="78" fill="#0a0000" fontFamily="Lato, 'Liberation Sans', sans-serif" fontStyle="italic" fontWeight="900" fontSize="14" textLength="108" lengthAdjust="spacingAndGlyphs">
      CALORECLIMA
    </text>
  </svg>
);

/* ---------- data ---------- */

const menu: [string, number, number?][] = [
  ["Sistema", 137], ["Utenti", 109], ["Menu", 104], ["Contenuti", 159], ["Componenti", 193, 0.3], ["Estensioni", 166], ["Aiuto", 100],
];

const groups: [string, [string, string, number?][]][] = [
  ["Content", [["pencil", "Nuovo articolo", 0.2], ["copy", "Gestione articoli"], ["folder", "Gestione categorie"], ["picture", "Gestione media"]]],
  ["Structure", [["list", "Gestione menu"], ["cube", "Gestione moduli"]]],
  ["Users", [["people", "Gestione utenti"]]],
  ["Configuration", [["gear", "Configurazione"], ["eye", "Gestione template"], ["chat", "Gestione lingua"]]],
  ["Extensions", [["download", "Install Extensions", -0.02], ["picture", "JCE File Browser", -0.1]]],
];

const tiles: [string, string, boolean?][] = [
  ["laptop", "File Manager"], ["files", "News"], ["dropbox", "Prodotti"], ["files", "Doc. Agenti"], ["file", "Doc. Sito"],
  ["report", "Reports"], ["marker", "Geo Marketing"], ["users", "Clienti"], ["calendar", "Eventi"],
  ["check", "Preventivatore"], ["truck", "Sales & Ass."], ["smile", "Chi Siamo"], ["picture", "Referenze"], ["money", "Preventivi"],
  ["bell", "Notification"], ["wrench", "Settings", true], ["puzzle", "Modules", true], ["gamepad", "Extensions", true],
  ["user", "Users", true], ["users", "IWP Users", true], ["book", "JCE", true], ["compass", "Update", true],
  ["gauge", "Template", true], ["files", "News", true], ["", "JCE File"], ["", "Controllo"], ["", "Controllo"],
];

const logins: [string, string, string][] = [
  ["Anania", "Sito", "19:44"],
  ["giovanni", "Sito", "19:05"],
  ["Super User", "Amministrazione", "20:15"],
  ["GIANCARLO", "Sito", "20:09"],
];

export default function App() {
  return (
    <Page>
      <GlobalStyle />
      <NavBar>
        <Icon name="joomla" />
        <Menu>
          {menu.map(([text, w, track]) => (
            <MenuItem key={text} $w={w} $track={track}>
              {text}
              <Caret />
            </MenuItem>
          ))}
        </Menu>
        <SiteLink>
          Lamborghini Ca...
          <Icon name="external" size={21} />
        </SiteLink>
        <Settings>
          <Icon name="gear" size={27} />
          <Caret />
        </Settings>
      </NavBar>
      <Header>
        <HomeIcon width="40" height="36" viewBox="0 0 40 36">
          <path d="M20 0L40 16V21.500L20 5.500L0 21.500V16ZM5 21H10V31H30V21H35V36H5Z" fill="#fff" />
        </HomeIcon>
        <Title>Pannello di controllo</Title>
        <Brand />
      </Header>
      <Columns>
        <Sidebar>
          {groups.map(([title, items]) => (
            <React.Fragment key={title}>
              <GroupTitle>{title}</GroupTitle>
              {items.map(([icon, text, track]) => (
                <SideItem key={text} $track={track}>
                  <Icon name={icon} />
                  {text}
                </SideItem>
              ))}
            </React.Fragment>
          ))}
          <GroupTitle />
          <SideItem>
            <Icon name="joomla" />
            {"Joomla! "}
            <Label>3.6.0</Label>
            {", Aggiorna adesso!"}
          </SideItem>
          <SideItem $tall $track={0.18}>
            <Icon name="star" />
            {"Aggiornamenti disponibili! "}
            <Label>3</Label>
          </SideItem>
        </Sidebar>
        <Main>
          <Panel $h={684}>
            <PanelTitle $track={-0.1}>Dashboard</PanelTitle>
            <Tiles>
              {tiles.map(([icon, text, blue], i) => (
                <Tile key={i} $blue={blue}>
                  <TileIcon>{icon && <Glyph name={icon} />}</TileIcon>
                  <TileText>{text}</TileText>
                </Tile>
              ))}
            </Tiles>
          </Panel>
          <Panel $h={380}>
            <PanelTitle $track={0.17}>Ultimi 5 utenti connessi</PanelTitle>
            {logins.map(([name, place, time], i) => (
              <Row key={name} $odd={i % 2 === 0}>
                <UserCell>
                  {name !== "Super User" && <Icon name="cross" size={26} />}
                  <UserName>
                    {name}
                    <Place>{place}</Place>
                  </UserName>
                </UserCell>
                <DateCell>
                  <Icon name="calendar" size={22} />
                  Giovedì, 29 Settembre 2016 {time}
                </DateCell>
              </Row>
            ))}
          </Panel>
        </Main>
      </Columns>
      <ScrollThumb />
      <StatusBar>
        <Icon name="external" size={22} />
        <Slot $l={17}>Vedi sito</Slot>
        <Pill $l={20} $w={48} $color="#999">3</Pill>
        <Slot $l={7}>Visitors</Slot>
        <Pill $l={9} $w={49} $color="#999">1</Pill>
        <Slot $l={6}>1 Amministratore</Slot>
        <Slot $l={10} $up={4}><Icon name="mail" size={25} /></Slot>
        <Pill $l={17} $w={48} $color="#f89406">8</Pill>
        <Slot $l={9} $up={4}><Icon name="minus" size={25} /></Slot>
        <Slot $l={16}>Esci</Slot>
        <Legal>
          <span>Joomla! 3.5.1</span>
          <Dash>—</Dash>
          <span>© 2016 Lamborghini Calor</span>
        </Legal>
      </StatusBar>
    </Page>
  );
}
